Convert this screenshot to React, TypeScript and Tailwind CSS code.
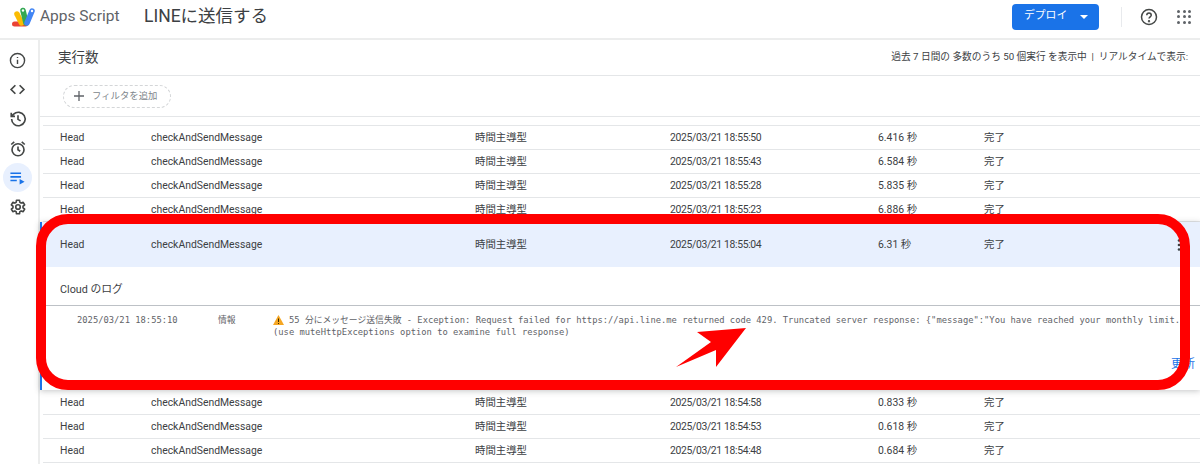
import React from "react";

function Cells({ t, d }: { t: string; d: string }) {
  return (
    <>
      <div className="w-[91px]">Head</div>
      <div className="w-[324px]">checkAndSendMessage</div>
      <div className="w-[195px]">時間主導型</div>
      <div className="w-[208px] tracking-[-0.35px]">2025/03/21 {t}</div>
      <div className="w-[106px]">{d} 秒</div>
      <div>完了</div>
    </>
  );
}

function Row({ t, d }: { t: string; d: string }) {
  return (
    <div className="flex items-center h-[24px] border-b border-[#e4e6e8] ml-[3px] pl-[17px] text-[10.4px] text-[#3c4043] shrink-0">
      <Cells t={t} d={d} />
    </div>
  );
}

function Logo() {
  return (
    <svg width="26" height="22" viewBox="0 0 26 22" className="shrink-0">
      <path d="M3.500 18h11" stroke="#ea4335" strokeWidth="5" strokeLinecap="round" />
      <path d="M6 8l4.500 9" stroke="#fbbc04" strokeWidth="5.500" strokeLinecap="round" />
      <path d="M12 4.500 15 17" stroke="#34a853" strokeWidth="5.500" strokeLinecap="round" />
      <path d="M21 5 16 17" stroke="#4285f4" strokeWidth="5.500" strokeLinecap="round" />
      <circle cx="12" cy="4.500" r="1.200" fill="#fff" />
      <circle cx="21" cy="5" r="1.200" fill="#fff" />
    </svg>
  );
}

export default function App() {
  return (
    <div className="relative w-[1200px] h-[464px] overflow-hidden bg-white flex flex-col font-['Roboto','Noto_Sans_CJK_JP',sans-serif] text-[#3c4043]">
      {/* header */}
      <header className="h-[40px] shrink-0 flex items-center border-b-2 border-[#eceded] pl-[11px] pb-[5px]">
        <Logo />
        <span className="ml-[3px] text-[15.500px] text-[#5f6368] w-[104px]">Apps Script</span>
        <span className="text-[17.500px] text-[#3c4043]">LINEに送信する</span>
        <div className="ml-auto flex items-center">
          <button className="w-[87px] h-[26px] rounded-[4px] bg-[#1a73e8] text-white text-[10.800px] flex items-center pl-[12px]">
            デプロイ
            <span className="ml-[13px] w-0 h-0 border-x-[4px] border-x-transparent border-t-[4px] border-t-white" />
          </button>
          <div className="ml-[22px] w-px h-[20px] bg-[#e8eaed]" />
          <svg className="ml-[18px] text-[#444746]" width="18" height="18" viewBox="0 0 24 24" fill="none" stroke="currentColor" strokeWidth="2">
            <circle cx="12" cy="12" r="10" />
            <path d="M9 9.500a3 3 0 0 1 6 0c0 2-3 2.500-3 4.500" />
            <circle cx="12" cy="17.500" r="0.600" fill="currentColor" />
          </svg>
          <div className="ml-[19px] mr-[9px] grid grid-cols-3 gap-[2.500px]">
            {Array.from({ length: 9 }).map((_, i) => (
              <span key={i} className="w-[3px] h-[3px] rounded-full bg-[#5f6368]" />
            ))}
          </div>
        </div>
      </header>

      <div className="flex flex-1 min-h-0">
        {/* sidebar */}
        <aside className="w-[40px] shrink-0 border-r-2 border-[#eceded] flex flex-col items-center pt-[6px] pr-[3px] text-[#444746]">
          <div className="h-[29px] flex items-center justify-center">
            <svg width="17" height="17" viewBox="0 0 24 24" fill="none" stroke="currentColor" strokeWidth="2">
              <circle cx="12" cy="12" r="10" />
              <path d="M12 11v6M12 7v1.500" />
            </svg>
          </div>
          <div className="h-[29px] flex items-center justify-center">
            <svg width="17" height="17" viewBox="0 0 24 24" fill="none" stroke="currentColor" strokeWidth="2.400">
              <path d="M9 6l-6 6 6 6M15 6l6 6-6 6" />
            </svg>
          </div>
          <div className="h-[30px] flex items-center justify-center">
            <svg width="18" height="18" viewBox="0 0 24 24" fill="none" stroke="currentColor" strokeWidth="2.200">
              <path d="M3.500 12a9 9 0 1 0 2.700-6.400L3 8.500M3 3.500v5h5M12 7v5.500l3.500 2" />
            </svg>
          </div>
          <div className="h-[29px] flex items-center justify-center">
            <svg width="18" height="18" viewBox="0 0 24 24" fill="none" stroke="currentColor" strokeWidth="2.200">
              <circle cx="12" cy="13" r="8" />
              <path d="M12 8.500V13l3 2M3 6l4-3.500M21 6l-4-3.500" />
            </svg>
          </div>
          <div className="w-[29px] h-[29px] rounded-full bg-[#e8f0fe] flex items-center justify-center">
            <svg width="17" height="17" viewBox="0 0 24 24" fill="#1a73e8">
              <path d="M2 5h15v2.200H2zM2 10h15v2.200H2zM2 15h9v2.200H2zM15 14l7 4-7 4z" />
            </svg>
          </div>
          <div className="h-[30px] flex items-center justify-center">
            <svg width="18" height="18" viewBox="0 0 24 24" fill="none" stroke="currentColor" strokeWidth="2.200" strokeLinejoin="round">
              <path d="M10 3h4l.500 2.800 1.700 1 2.700-1 2 3.400-2.200 1.800v2l2.200 1.800-2 3.400-2.700-1-1.700 1L14 21h-4l-.500-2.800-1.700-1-2.700 1-2-3.400L5.300 13v-2L3.100 9.200l2-3.400 2.700 1 1.700-1z" />
              <circle cx="12" cy="12" r="3" />
            </svg>
          </div>
        </aside>

        <main className="flex-1 min-w-0 flex flex-col">
          <div className="h-[36px] shrink-0 flex items-center border-b border-[#e4e6e8] pl-[18px]">
            <span className="text-[13.500px]">実行数</span>
            <span className="ml-auto text-[9.700px] whitespace-nowrap mr-[12px]">
              過去 7 日間の 多数のうち 50 個実行 を表示中&nbsp; |&nbsp; リアルタイムで表示:
            </span>
          </div>
          <div className="h-[41px] shrink-0 flex items-center border-b border-[#e4e6e8] pl-[23px]">
            <div className="w-[108px] h-[23px] rounded-full border border-dashed border-[#d4d6d8] flex items-center pl-[9px] text-[9.400px] text-[#80868b]">
              <svg width="12" height="12" viewBox="0 0 12 12" stroke="#5f6368" strokeWidth="1.300">
                <path d="M6 1v10M1 6h10" />
              </svg>
              <span className="ml-[7px]">フィルタを追加</span>
            </div>
          </div>
          <div className="flex-1 min-h-0 flex flex-col pt-[8px]">
            <div className="h-px bg-[#e4e6e8] ml-[3px] shrink-0" />
            <Row t="18:55:50" d="6.416" />
            <Row t="18:55:43" d="6.584" />
            <Row t="18:55:28" d="5.835" />
            <Row t="18:55:23" d="6.886" />

            {/* expanded */}
            <div className="shrink-0 h-[168px] border-l-2 border-[#1a73e8] shadow-[0_1px_6px_rgba(60,64,67,0.3)] flex flex-col">
              <div className="h-[45px] bg-[#e8f0fe] flex items-center pl-[18px] text-[10.4px] shrink-0">
                <Cells t="18:55:04" d="6.31" />
                <svg className="ml-auto mr-[19px]" width="4" height="14" viewBox="0 0 4 14" fill="#3c4043">
                  <circle cx="2" cy="2.500" r="1.300" />
                  <circle cx="2" cy="7" r="1.300" />
                  <circle cx="2" cy="11.500" r="1.300" />
                </svg>
              </div>
              <div className="pl-[18px] pt-[15px] text-[10.800px] h-[39px] shrink-0 border-b border-[#bdc1c6]">Cloud のログ</div>
              <div className="flex pl-[35px] pt-[8px] text-[8.800px] leading-[12px] font-['DejaVu_Sans_Mono','Noto_Sans_CJK_JP',monospace] text-[#5f6368]">
                <div className="w-[141px] shrink-0">2025/03/21 18:55:10</div>
                <div className="w-[55px] shrink-0">情報</div>
                <div className="min-w-0">
                  <div className="flex items-center whitespace-nowrap">
                    <svg width="11" height="10" viewBox="0 0 11 10" className="mr-[5px] shrink-0">
                      <path d="M5.500 0 11 10H0z" fill="#f5a623" />
                      <path d="M5.500 3.500v3.500M5.500 8v1" stroke="#3c2a00" strokeWidth="1" />
                    </svg>
                    55 分にメッセージ送信失敗 - Exception: Request failed for https://api.line.me returned code 429. Truncated server response: {'{"message":"You have reached your monthly limit."'}
                  </div>
                  <div>(use muteHttpExceptions option to examine full response)</div>
                </div>
              </div>
              <div className="mt-auto mb-[17px] self-end mr-[5px] text-[12px] text-[#1a73e8]">更新</div>
            </div>

            <div className="h-[1px] shrink-0" />
            <Row t="18:54:58" d="0.833" />
            <Row t="18:54:53" d="0.618" />
            <Row t="18:54:48" d="0.684" />
          </div>
        </main>
      </div>

      {/* annotation overlay */}
      <div className="absolute left-[36px] top-[214px] w-[1154px] h-[176px] rounded-[32px] border-[10px] border-[#ff0000]" />
      <svg className="absolute left-[670px] top-[320px]" width="90" height="55" viewBox="0 0 90 55">
        <path d="M6 47 L41 22 L27 12 L76 8 L46 47 L46 30 Z" fill="#ff0000" />
      </svg>
    </div>
  );
}
